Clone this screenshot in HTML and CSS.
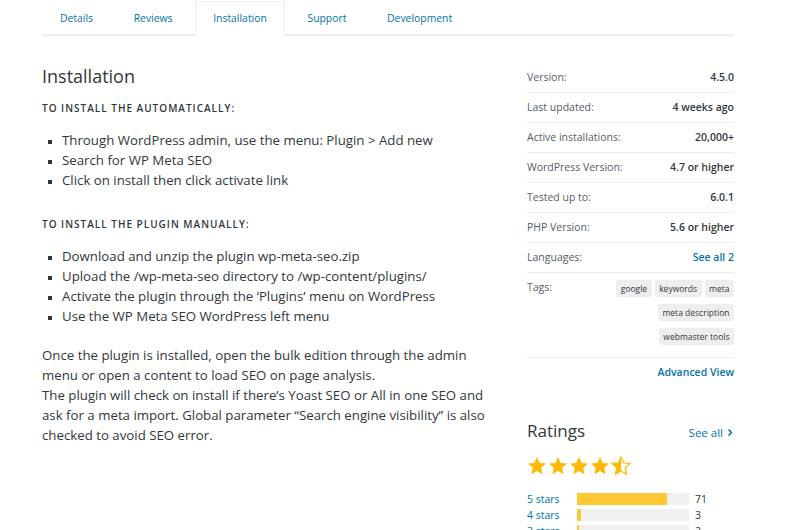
FILE: index.html
```html
<!DOCTYPE html>
<html>
<head>
<meta charset="utf-8">
<link rel="stylesheet" href="styles.css">
</head>
<body>
<div class="page">
  <nav class="tabs">
    <a class="tab">Details</a>
    <a class="tab">Reviews</a>
    <a class="tab active">Installation</a>
    <a class="tab">Support</a>
    <a class="tab">Development</a>
  </nav>
  <div class="content">
    <main class="main">
      <h2 class="title">Installation</h2>
      <h4 class="sub">To install the automatically:</h4>
      <ul class="list">
        <li>Through WordPress admin, use the menu: Plugin &gt; Add new</li>
        <li>Search for WP Meta SEO</li>
        <li>Click on install then click activate link</li>
      </ul>
      <h4 class="sub">To install the plugin manually:</h4>
      <ul class="list last">
        <li>Download and unzip the plugin wp-meta-seo.zip</li>
        <li>Upload the /wp-meta-seo directory to /wp-content/plugins/</li>
        <li>Activate the plugin through the ‘Plugins’ menu on WordPress</li>
        <li>Use the WP Meta SEO WordPress left menu</li>
      </ul>
      <p class="para">Once the plugin is installed, open the bulk edition through the admin menu or open a content to load SEO on page analysis.<br>The plugin will check on install if there’s Yoast SEO or All in one SEO and ask for a meta import. Global parameter “Search engine visibility” is also checked to avoid SEO error.</p>
    </main>
    <aside class="side">
      <ul class="meta">
        <li class="row"><span class="label">Version:</span><strong>4.5.0</strong></li>
        <li class="row"><span class="label">Last updated:</span><strong>4 weeks ago</strong></li>
        <li class="row"><span class="label">Active installations:</span><strong>20,000+</strong></li>
        <li class="row"><span class="label">WordPress Version:</span><strong>4.7 or higher</strong></li>
        <li class="row"><span class="label">Tested up to:</span><strong>6.0.1</strong></li>
        <li class="row"><span class="label">PHP Version:</span><strong>5.6 or higher</strong></li>
        <li class="row"><span class="label">Languages:</span><a class="link">See all 2</a></li>
        <li class="row tagsrow"><span class="label">Tags:</span>
          <div class="tags">
            <span class="tag">google</span><span class="tag">keywords</span><span class="tag">meta</span><span class="tag">meta description</span><span class="tag">webmaster tools</span>
          </div>
        </li>
      </ul>
      <div class="adv"><a class="link">Advanced View</a></div>
      <div class="ratings-head">
        <h2 class="rtitle">Ratings</h2>
        <a class="seeall">See all <svg width="8" height="9" viewBox="0 0 8 9"><path d="M2.5 1.5 L5.5 4.5 L2.5 7.5" fill="none" stroke="#0073aa" stroke-width="1.5"/></svg></a>
      </div>
      <div class="stars">
        <svg width="104" height="20" viewBox="0 0 104 20">
          <defs>
            <path id="st" d="M10 1 L12.6 6.9 L19 7.5 L14.2 11.8 L15.6 18.2 L10 14.9 L4.4 18.2 L5.8 11.8 L1 7.5 L7.4 6.9 Z"/>
            <clipPath id="half"><rect x="0" y="0" width="10" height="20"/></clipPath>
          </defs>
          <use href="#st" x="0" fill="#ffb900"/>
          <use href="#st" x="21" fill="#ffb900"/>
          <use href="#st" x="42" fill="#ffb900"/>
          <use href="#st" x="63" fill="#ffb900"/>
          <g transform="translate(84 0)">
            <use href="#st" fill="#fff" stroke="#ffb900" stroke-width="1.2"/>
            <use href="#st" fill="#ffb900" clip-path="url(#half)"/>
          </g>
        </svg>
      </div>
      <ul class="bars">
        <li class="bar"><a class="blabel">5 stars</a><span class="track"><span class="fill" style="width:80%"></span></span><span class="count">71</span></li>
        <li class="bar"><a class="blabel">4 stars</a><span class="track"><span class="fill" style="width:3.5%"></span></span><span class="count">3</span></li>
        <li class="bar"><a class="blabel">3 stars</a><span class="track"><span class="fill" style="width:2%"></span></span><span class="count">2</span></li>
      </ul>
    </aside>
  </div>
</div>
</body>
</html>
```
FILE: styles.css
```css
* { box-sizing: border-box; }
body {
  margin: 0;
  background: #fff;
  font-family: "Open Sans", "Noto Sans", sans-serif;
  color: #32373c;
}
.page {
  width: 692px;
  margin-left: 42px;
}
.tabs {
  display: flex;
  padding-top: 1px;
  border-bottom: 2px solid #eee;
  height: 36px;
}
.tab {
  display: block;
  padding: 0 17px;
  margin-right: 4.6px;
  line-height: 33px;
  font-size: 10.4px;
  color: #0073aa;
  border: 1px solid transparent;
  border-bottom: none;
  margin-bottom: -2px;
  height: 35px;
}
.tab.active {
  border-color: #eee;
  background: #fff;
}
.content {
  display: flex;
  gap: 40px;
}
.main {
  width: 445px;
}
.title {
  font-size: 18px;
  font-weight: 400;
  margin: 28px 0 0;
  line-height: 24px;
}
.sub {
  font-size: 10px;
  font-weight: 600;
  letter-spacing: 1px;
  text-transform: uppercase;
  color: #32373c;
  margin: 12px 0 0;
  line-height: 16px;
}
.list {
  margin: 14px 0 26px;
  padding-left: 20px;
  list-style: square;
  font-size: 13.25px;
  line-height: 20px;
  color: #32373c;
}
.list.last { margin-bottom: 19px; }
.list li::marker { font-size: 10px; }
.para {
  font-size: 13.25px;
  line-height: 20px;
  margin: 19px 0 0;
  color: #32373c;
}
.side {
  width: 207px;
}
.meta {
  list-style: none;
  margin: 27px 0 0;
  padding: 0;
  font-size: 10.5px;
}
.row {
  display: flex;
  justify-content: space-between;
  align-items: baseline;
  border-top: 1px solid #eee;
  padding: 7px 0 7px;
  line-height: 15px;
}
.row:first-child { border-top: none; }
.label { color: #555d66; }
.row strong { font-weight: 600; color: #32373c; }
.link { color: #0073aa; font-weight: 600; }
.tagsrow { align-items: flex-start; padding-bottom: 12px; }
.tags {
  width: 118px;
  display: flex;
  flex-wrap: wrap;
  justify-content: flex-end;
  gap: 7px 3px;
}
.tag {
  background: #eee;
  font-size: 8.5px;
  line-height: 17px;
  padding: 0 4.5px;
  border-radius: 2px;
  color: #32373c;
}
.adv {
  border-top: 1px solid #eee;
  text-align: right;
  font-size: 10.5px;
  padding-top: 7px;
}
.ratings-head {
  display: flex;
  justify-content: space-between;
  align-items: baseline;
  margin-top: 40px;
}
.rtitle {
  font-size: 17px;
  font-weight: 400;
  margin: 0;
}
.seeall {
  color: #0073aa;
  font-size: 11.5px;
}
.stars { margin-top: 14px; height: 22px; }
.bars {
  list-style: none;
  margin: 13px 0 0;
  padding: 0;
  font-size: 10.5px;
}
.bar {
  display: flex;
  align-items: center;
  height: 16px;
}
.blabel { color: #0073aa; width: 50px; }
.track {
  width: 112px;
  height: 12px;
  background: #f0f0f0;
  display: block;
}
.fill { display: block; height: 100%; background: #ffc733; }
.count { margin-left: 6px; }
```
